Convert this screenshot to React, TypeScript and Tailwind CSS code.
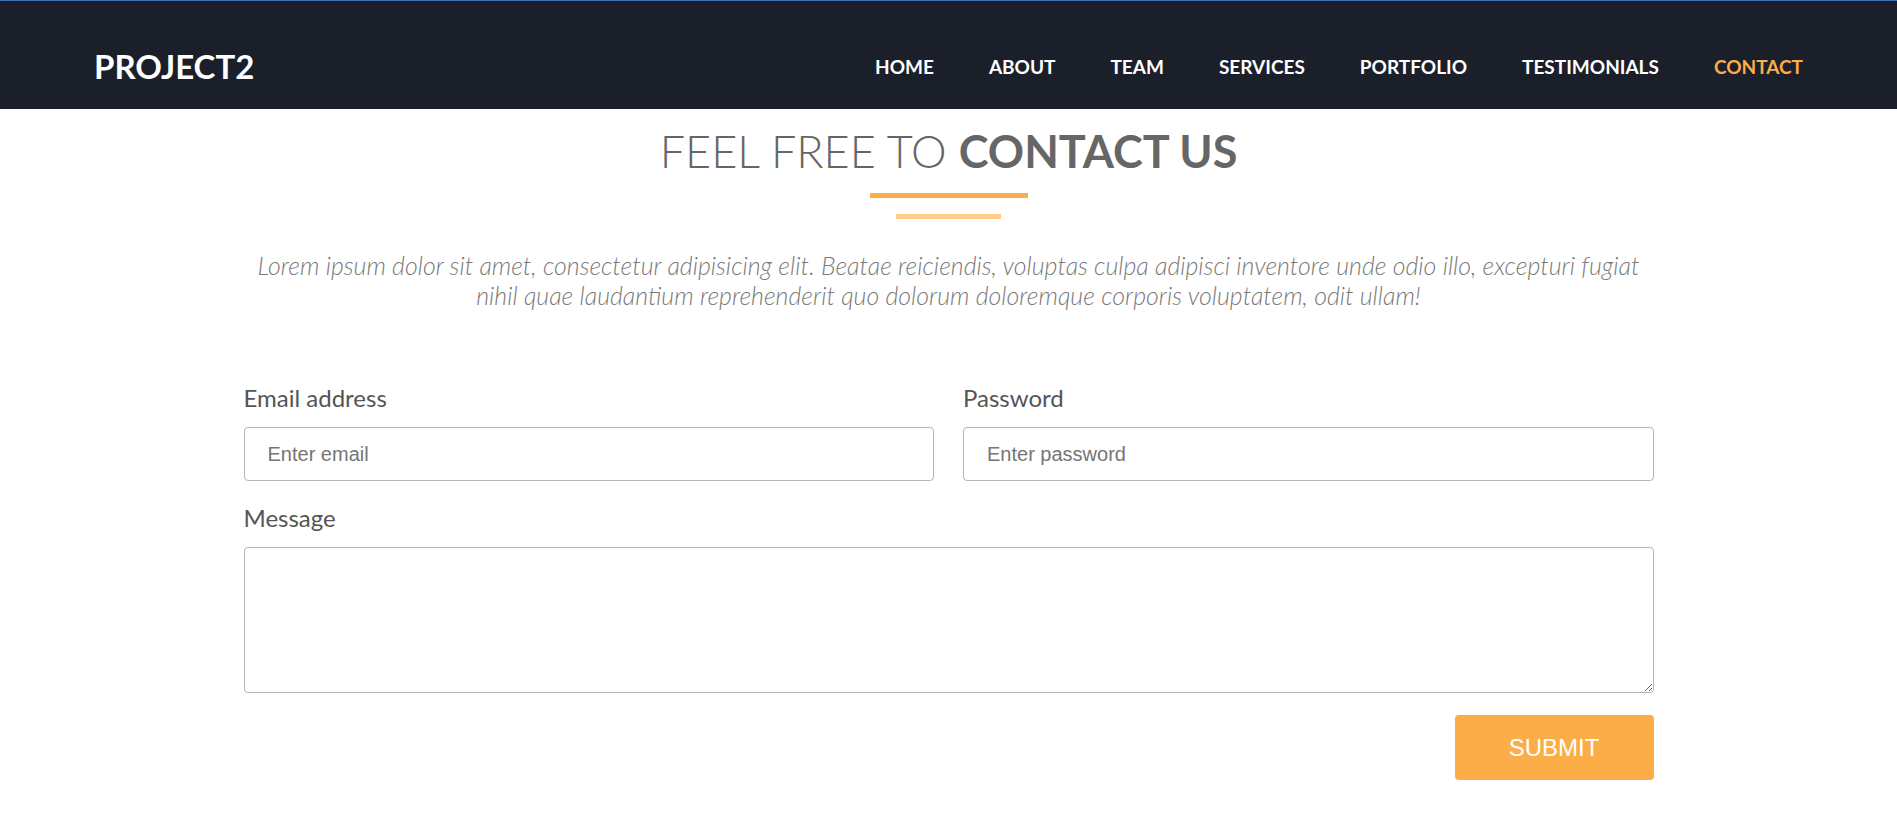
import React from "react";

const navItems = ["HOME", "ABOUT", "TEAM", "SERVICES", "PORTFOLIO", "TESTIMONIALS", "CONTACT"];

export default function App() {
  return (
    <div className="min-h-[825px] bg-white" style={{ fontFamily: "Lato, 'Noto Sans', sans-serif" }}>
      <header className="h-[109px] bg-[#1b1f2a] border-t border-[#3f6fbf] flex items-center justify-between px-[94px] pt-[22px]">
        <div className="text-white font-bold text-[33px] leading-none">PROJECT2</div>
        <nav className="flex items-center gap-[55px]">
          {navItems.map((item) => (
            <a
              key={item}
              href="#"
              className={
                item === "CONTACT"
                  ? "text-[#fbad47] font-bold text-[19px] leading-none"
                  : "text-white font-bold text-[19px] leading-none"
              }
            >
              {item}
            </a>
          ))}
        </nav>
      </header>

      <section className="flex flex-col items-center pt-[15px]">
        <h1 className="text-[45px] leading-[54px] text-[#666666]">
          <span className="font-light">FEEL FREE TO </span>
          <span className="font-bold">CONTACT US</span>
        </h1>
        <div className="mt-[15px] h-[5px] w-[158px] bg-[#fbad47]" />
        <div className="mt-[16px] h-[5px] w-[105px] bg-[#fdcb8a]" />
        <p
          className="mt-[31px] w-[1410px] text-center italic font-light text-[24.9px] leading-[30px] text-[#7a7a7a]"
          style={{ fontFamily: "'Lato Light', Lato, 'Noto Sans', sans-serif" }}
        >
          Lorem ipsum dolor sit amet, consectetur adipisicing elit. Beatae reiciendis, voluptas culpa adipisci inventore unde odio illo, excepturi fugiat nihil quae laudantium reprehenderit quo dolorum doloremque corporis voluptatem, odit ullam!
        </p>

        <form className="mt-[73px] w-[1410px] flex flex-col">
          <div className="grid grid-cols-2 gap-x-[29px]">
            <div className="flex flex-col">
              <label className="text-[24px] leading-[30px] text-[#555555] mb-[14px]">Email address</label>
              <input
                type="email"
                placeholder="Enter email"
                className="h-[54px] border border-[#b5b5b5] rounded-[4px] pl-[23px] text-[20px] text-[#444] placeholder:text-[#757575] outline-none"
                style={{ fontFamily: "'Liberation Sans', Arial, sans-serif" }}
              />
            </div>
            <div className="flex flex-col">
              <label className="text-[24px] leading-[30px] text-[#555555] mb-[14px]">Password</label>
              <input
                type="password"
                placeholder="Enter password"
                className="h-[54px] border border-[#b5b5b5] rounded-[4px] pl-[23px] text-[20px] text-[#444] placeholder:text-[#757575] outline-none"
                style={{ fontFamily: "'Liberation Sans', Arial, sans-serif" }}
              />
            </div>
          </div>
          <label className="mt-[22px] text-[24px] leading-[30px] text-[#555555] mb-[14px]">Message</label>
          <textarea
            className="h-[146px] border border-[#b5b5b5] rounded-[4px] p-[12px] text-[20px] outline-none"
            style={{ fontFamily: "'Liberation Sans', Arial, sans-serif" }}
          />
          <div className="flex justify-end mt-[22px]">
            <button
              type="button"
              className="w-[199px] h-[65px] bg-[#fbad47] rounded-[4px] text-white text-[24px]"
              style={{ fontFamily: "'Liberation Sans', Arial, sans-serif" }}
            >
              SUBMIT
            </button>
          </div>
        </form>
      </section>
    </div>
  );
}
